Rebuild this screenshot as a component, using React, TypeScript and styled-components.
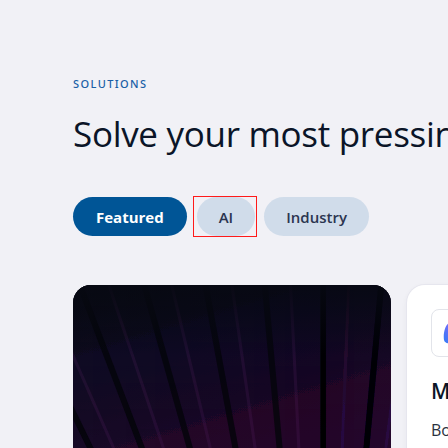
import React from "react";
import styled, { createGlobalStyle } from "styled-components";

const Global = createGlobalStyle`
  html, body { margin: 0; padding: 0; }
  body {
    background: #f1f1f6;
    font-family: "Open Sans", "Noto Sans", sans-serif;
    overflow: hidden;
  }
`;

const Page = styled.div`
  width: 448px;
  height: 448px;
  overflow: hidden;
  background: #f1f1f6;
`;

const Section = styled.section`
  padding: 76px 0 0 73px;
  display: flex;
  flex-direction: column;
`;

const Eyebrow = styled.div`
  font-family: "Noto Sans", "Open Sans", sans-serif;
  font-size: 11px;
  line-height: 16px;
  letter-spacing: 1.4px;
  color: #1a5fa6;
  text-transform: uppercase;
  font-weight: 500;
`;

const Heading = styled.h2`
  margin: 21px 0 0;
  font-size: 35px;
  line-height: 42px;
  font-weight: 500;
  color: #0b1528;
  white-space: nowrap;
  letter-spacing: -0.3px;
`;

const Tabs = styled.div`
  display: flex;
  align-items: center;
  gap: 7px;
  margin-top: 42px;
`;

const Pill = styled.button<{ $active?: boolean }>`
  height: 39px;
  border: none;
  border-radius: 20px;
  padding: 0 ${(p) => (p.$active ? "23px" : "22px")};
  font-family: inherit;
  font-size: 15px;
  font-weight: ${(p) => (p.$active ? 700 : 600)};
  background: ${(p) => (p.$active ? "#005596" : "#d0dcea")};
  color: ${(p) => (p.$active ? "#ffffff" : "#2b3550")};
  flex: none;
  cursor: pointer;
`;

const Focus = styled.div`
  outline: 1px solid #ff1a1a;
  display: flex;
  padding: 0 1px 0 3px;
  margin-right: 1px;
`;

const Cards = styled.div`
  display: flex;
  gap: 16px;
  margin-top: 49px;
`;

const ImageCard = styled.div`
  width: 318px;
  height: 320px;
  flex: none;
  border-radius: 18px;
  overflow: hidden;
  background: #0a0c16;
`;

const InfoCard = styled.div`
  width: 300px;
  height: 320px;
  flex: none;
  background: #ffffff;
  border-radius: 18px;
  box-shadow: 0 0 0 1px #e6e6ee, 0 2px 6px rgba(20, 20, 60, 0.06);
  padding: 24px;
  box-sizing: border-box;
  display: flex;
  flex-direction: column;
`;

const IconBox = styled.div`
  width: 48px;
  height: 48px;
  border-radius: 8px;
  border: 1px solid #e2e4ea;
  display: flex;
  align-items: center;
  justify-content: center;
  box-sizing: border-box;
`;

const CardTitle = styled.div`
  margin-top: 20px;
  font-size: 21px;
  font-weight: 600;
  color: #0b1528;
`;

const CardText = styled.div`
  margin-top: 14px;
  font-size: 16px;
  color: #2a3140;
`;

const Fan = () => {
  const lines = [];
  const cx = 250;
  const cy = 640;
  for (let i = -14; i <= 14; i++) {
    const deg = i * 5.2;
    const ang = (deg * Math.PI) / 180;
    lines.push(
      <line
        key={i}
        x1={cx}
        y1={cy}
        x2={cx + Math.sin(ang) * 720}
        y2={cy - Math.cos(ang) * 720}
        stroke="#04050a"
        strokeWidth="6"
        opacity="0.8"
      />
    );
    const ang2 = ((deg + 2.3) * Math.PI) / 180;
    lines.push(
      <line
        key={"h" + i}
        x1={cx}
        y1={cy}
        x2={cx + Math.sin(ang2) * 720}
        y2={cy - Math.cos(ang2) * 720}
        stroke="#7a3088"
        strokeWidth="3"
        opacity="0.14"
      />
    );
  }
  return (
    <svg width="318" height="320" viewBox="0 0 318 320">
      <defs>
        <linearGradient id="bg" x1="0" y1="0" x2="0.3" y2="1">
          <stop offset="0" stopColor="#0a0c17" />
          <stop offset="0.3" stopColor="#181228" />
          <stop offset="0.65" stopColor="#2a1438" />
          <stop offset="1" stopColor="#3a1a40" />
        </linearGradient>
        <linearGradient id="fade" x1="0" y1="0" x2="0" y2="1">
          <stop offset="0" stopColor="#070912" stopOpacity="0.9" />
          <stop offset="0.22" stopColor="#070912" stopOpacity="0" />
        </linearGradient>
      </defs>
      <rect width="318" height="320" fill="url(#bg)" />
      {lines}
      <rect width="318" height="320" fill="url(#fade)" />
    </svg>
  );
};

const Logo = () => (
  <svg width="28" height="28" viewBox="0 0 28 28">
    <defs>
      <linearGradient id="lg" x1="0" y1="1" x2="1" y2="0">
        <stop offset="0" stopColor="#2f7cf6" />
        <stop offset="0.6" stopColor="#6d6cf8" />
        <stop offset="1" stopColor="#b57bf4" />
      </linearGradient>
    </defs>
    <path d="M8 4 C13 2 16 5 14 10 L10 22 C9 25 4 25 3 21 C2 15 4 6 8 4 Z" fill="url(#lg)" />
    <path d="M16 6 C20 4 25 7 25 12 C25 18 21 24 17 24 C14 24 14 21 15 18 Z" fill="#38b6f0" opacity="0.8" />
  </svg>
);

export default function App() {
  return (
    <Page>
      <Global />
      <Section>
        <Eyebrow>Solutions</Eyebrow>
        <Heading>Solve your most pressing business problems</Heading>
        <Tabs>
          <Pill $active>Featured</Pill>
          <Focus>
            <Pill>AI</Pill>
          </Focus>
          <Pill>Industry</Pill>
        </Tabs>
        <Cards>
          <ImageCard>
            <Fan />
          </ImageCard>
          <InfoCard>
            <IconBox>
              <Logo />
            </IconBox>
            <CardTitle>Microsoft 365 Copilot</CardTitle>
            <CardText>Boost productivity</CardText>
          </InfoCard>
        </Cards>
      </Section>
    </Page>
  );
}
